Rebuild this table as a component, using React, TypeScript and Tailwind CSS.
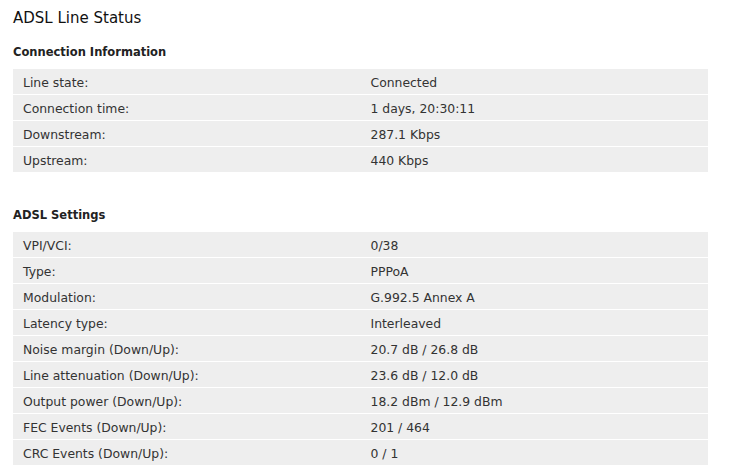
const connection = [
  ["Line state:", "Connected"],
  ["Connection time:", "1 days, 20:30:11"],
  ["Downstream:", "287.1 Kbps"],
  ["Upstream:", "440 Kbps"],
];

const settings = [
  ["VPI/VCI:", "0/38"],
  ["Type:", "PPPoA"],
  ["Modulation:", "G.992.5 Annex A"],
  ["Latency type:", "Interleaved"],
  ["Noise margin (Down/Up):", "20.7 dB / 26.8 dB"],
  ["Line attenuation (Down/Up):", "23.6 dB / 12.0 dB"],
  ["Output power (Down/Up):", "18.2 dBm / 12.9 dBm"],
  ["FEC Events (Down/Up):", "201 / 464"],
  ["CRC Events (Down/Up):", "0 / 1"],
];

function StatusTable({ rows }: { rows: string[][] }) {
  return (
    <div className="w-[695px] flex flex-col gap-px">
      {rows.map(([label, value]) => (
        <div key={label} className="h-[25px] bg-[#eeeeee] grid grid-cols-2 items-center pt-[3px]">
          <div className="px-[10px]">{label}</div>
          <div className="px-[10px]">{value}</div>
        </div>
      ))}
    </div>
  );
}

export default function App() {
  return (
    <main
      className="min-h-screen bg-white text-[#333333] px-[13px] pt-[9px] text-[12.4px]"
      style={{ fontFamily: '"DejaVu Sans", Verdana, sans-serif' }}
    >
      <h1 className="text-[15px] leading-[18px] text-[#111111]">ADSL Line Status</h1>

      <h2 className="mt-[18px] text-[11.5px] leading-[14px] font-bold text-[#222222]">Connection Information</h2>
      <div className="mt-[10px]">
        <StatusTable rows={connection} />
      </div>

      <h2 className="mt-[36px] text-[11.5px] leading-[14px] font-bold text-[#222222]">ADSL Settings</h2>
      <div className="mt-[10px]">
        <StatusTable rows={settings} />
      </div>
    </main>
  );
}
